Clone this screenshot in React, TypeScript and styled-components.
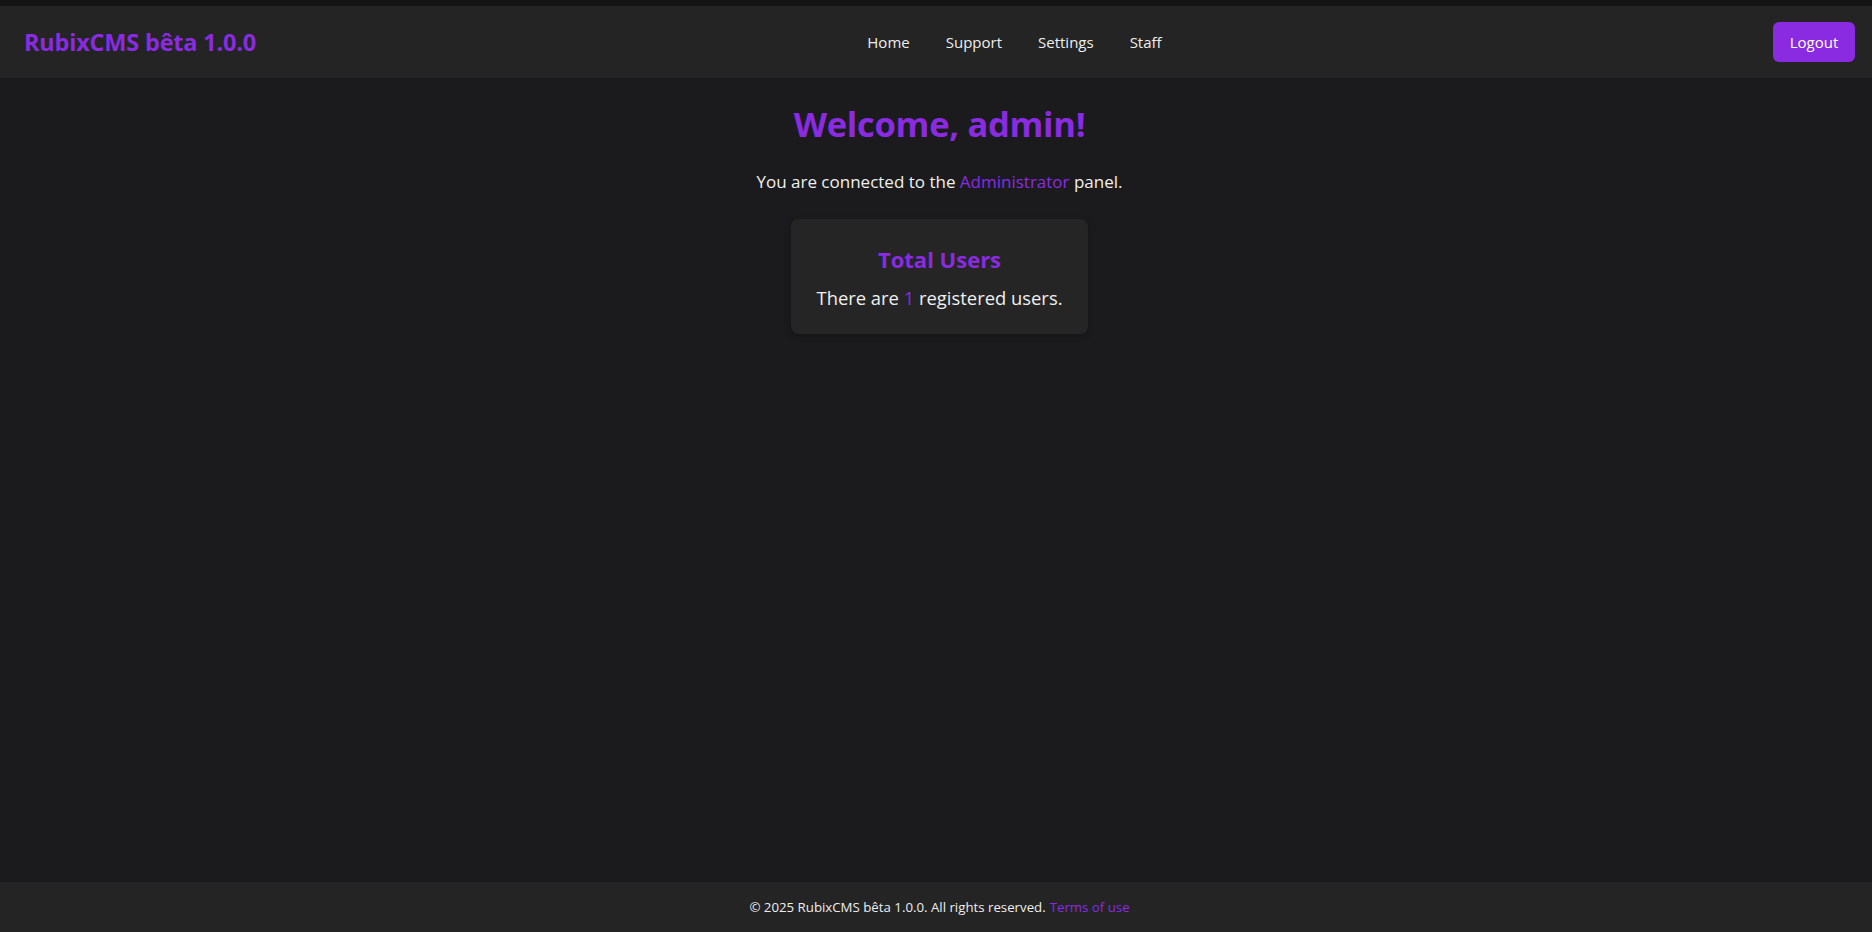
import React from "react";
import styled, { createGlobalStyle } from "styled-components";

const GlobalStyle = createGlobalStyle`
  * { box-sizing: border-box; }
  html, body { margin: 0; padding: 0; }
  body {
    background: #1b1b1d;
    color: #f0f0f0;
    font-family: "Open Sans", "Noto Sans", sans-serif;
    border-top: 6px solid #151515;
  }
`;

const purple = "#8a2be2";

const Page = styled.div`
  min-height: calc(100vh - 6px);
  display: flex;
  flex-direction: column;
`;

const Header = styled.header`
  height: 72px;
  background: #242424;
  display: flex;
  align-items: center;
  justify-content: space-between;
  padding: 0 17px 0 24px;
`;

const Logo = styled.div`
  color: ${purple};
  font-size: 23.5px;
  font-weight: 700;
  letter-spacing: -0.2px;
`;

const Nav = styled.nav`
  display: flex;
  gap: 36px;
`;

const NavLink = styled.a`
  color: #eeeeee;
  font-size: 15px;
  text-decoration: none;
`;

const LogoutButton = styled.button`
  background: ${purple};
  color: #ffffff;
  border: none;
  border-radius: 6px;
  height: 40px;
  width: 82px;
  font-family: inherit;
  font-size: 15px;
  padding: 0;
`;

const Main = styled.main`
  flex: 1;
  display: flex;
  flex-direction: column;
  align-items: center;
  padding: 24px 0 0 7px;
`;

const Title = styled.h1`
  margin: 0;
  color: ${purple};
  font-size: 34.5px;
  font-weight: 700;
  line-height: 1.3;
  letter-spacing: -0.3px;
`;

const Lead = styled.p`
  margin: 24px 0 0;
  font-size: 17px;
  line-height: 1.3;
`;

const Accent = styled.span`
  color: ${purple};
`;

const Card = styled.section`
  margin-top: 26px;
  width: 297px;
  height: 115px;
  background: #252525;
  border-radius: 8px;
  box-shadow: 0 2px 6px rgba(0, 0, 0, 0.25);
  display: flex;
  flex-direction: column;
  align-items: center;
  padding-top: 26px;
`;

const CardTitle = styled.h2`
  margin: 0;
  color: ${purple};
  font-size: 22px;
  font-weight: 700;
  line-height: 1.3;
`;

const CardText = styled.p`
  margin: 12px 0 0;
  font-size: 18.4px;
  line-height: 1.3;
`;

const Footer = styled.footer`
  height: 50px;
  background: #242424;
  display: flex;
  align-items: center;
  justify-content: center;
  padding-left: 7px;
  font-size: 13.25px;
  color: #eeeeee;
`;

const FooterLink = styled.a`
  color: ${purple};
  text-decoration: none;
  margin-left: 4px;
`;

export default function App() {
  return (
    <>
      <GlobalStyle />
      <Page>
        <Header>
          <Logo>RubixCMS bêta 1.0.0</Logo>
          <Nav>
            <NavLink href="#">Home</NavLink>
            <NavLink href="#">Support</NavLink>
            <NavLink href="#">Settings</NavLink>
            <NavLink href="#">Staff</NavLink>
          </Nav>
          <LogoutButton>Logout</LogoutButton>
        </Header>
        <Main>
          <Title>Welcome, admin!</Title>
          <Lead>
            You are connected to the <Accent>Administrator</Accent> panel.
          </Lead>
          <Card>
            <CardTitle>Total Users</CardTitle>
            <CardText>
              There are <Accent>1</Accent> registered users.
            </CardText>
          </Card>
        </Main>
        <Footer>
          © 2025 RubixCMS bêta 1.0.0. All rights reserved.
          <FooterLink href="#">Terms of use</FooterLink>
        </Footer>
      </Page>
    </>
  );
}
